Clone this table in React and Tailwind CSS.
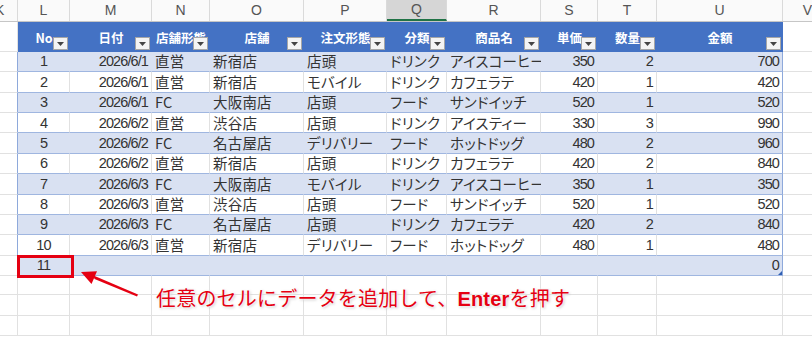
import React from 'react';

const cols = [
  { k: 'K', w: 18 },
  { k: 'L', w: 52, h: 'No', a: 'center', num: true },
  { k: 'M', w: 82, h: '日付', a: 'right', num: true },
  { k: 'N', w: 58, h: '店舗形態', a: 'left' },
  { k: 'O', w: 94, h: '店舗', a: 'left' },
  { k: 'P', w: 83, h: '注文形態', a: 'left' },
  { k: 'Q', w: 60, h: '分類', a: 'left' },
  { k: 'R', w: 94, h: '商品名', a: 'left' },
  { k: 'S', w: 57, h: '単価', a: 'right', num: true },
  { k: 'T', w: 59, h: '数量', a: 'right', num: true },
  { k: 'U', w: 126, h: '金額', a: 'right', num: true },
  { k: 'V', w: 50 },
];

const rows = [
  ['1', '2026/6/1', '直営', '新宿店', '店頭', 'ドリンク', 'アイスコーヒー', '350', '2', '700'],
  ['2', '2026/6/1', '直営', '新宿店', 'モバイル', 'ドリンク', 'カフェラテ', '420', '1', '420'],
  ['3', '2026/6/1', 'FC', '大阪南店', '店頭', 'フード', 'サンドイッチ', '520', '1', '520'],
  ['4', '2026/6/2', '直営', '渋谷店', '店頭', 'ドリンク', 'アイスティー', '330', '3', '990'],
  ['5', '2026/6/2', 'FC', '名古屋店', 'デリバリー', 'フード', 'ホットドッグ', '480', '2', '960'],
  ['6', '2026/6/2', '直営', '新宿店', '店頭', 'ドリンク', 'カフェラテ', '420', '2', '840'],
  ['7', '2026/6/3', 'FC', '大阪南店', 'モバイル', 'ドリンク', 'アイスコーヒー', '350', '1', '350'],
  ['8', '2026/6/3', '直営', '渋谷店', '店頭', 'フード', 'サンドイッチ', '520', '1', '520'],
  ['9', '2026/6/3', 'FC', '名古屋店', '店頭', 'ドリンク', 'カフェラテ', '420', '2', '840'],
  ['10', '2026/6/3', '直営', '新宿店', 'デリバリー', 'フード', 'ホットドッグ', '480', '1', '480'],
  ['11', '', '', '', '', '', '', '', '', '0'],
];

const alignCls = { left: 'justify-start pl-[3px]', right: 'justify-end pr-[3px]', center: 'justify-center' };

// filter dropdown button in the header cells
const FilterBtn = () => (
  <div className="absolute right-[2px] bottom-[2px] w-[15px] h-[13px] bg-[#f4f4f4] border border-[#a6a6a6] flex items-center justify-center">
    <svg width="7" height="4" viewBox="0 0 7 4"><path d="M0 0h7L3.5 4z" fill="#444" /></svg>
  </div>
);

const GridRow = ({ h }) => (
  <div className="flex" style={{ height: h }}>
    {cols.map((c) => (
      <div key={c.k} style={{ width: c.w }} className="shrink-0 border-r border-b border-[#e1e1e1]" />
    ))}
  </div>
);

export default function App() {
  return (
    <div className="relative w-[812px] h-[339px] overflow-hidden bg-white text-[#333] font-['Noto_Sans_CJK_JP',sans-serif]">
      {/* column letters */}
      <div className="flex h-[22px] bg-[#fafafa] border-b border-[#c6c6c6] font-['Liberation_Sans','Noto_Sans_CJK_JP',sans-serif] text-[14px] text-[#555]">
        {cols.map((c) => (
          <div
            key={c.k}
            style={{ width: c.w }}
            className={`shrink-0 flex items-center overflow-hidden border-r border-[#dadada] ${
              c.k === 'K' ? 'justify-start pl-0' : 'justify-center'
            } ${c.k === 'Q' ? 'bg-[#d6d6d6] border-b-2 border-b-[#217346]' : ''}`}
          >
            <span className={c.k === 'K' ? '-ml-[5px]' : ''}>{c.k}</span>
          </div>
        ))}
      </div>

      {/* table header */}
      <div className="flex h-[30px]">
        {cols.map((c, i) => {
          if (i === 0 || i === 11) return <div key={c.k} style={{ width: c.w }} className="shrink-0 border-r border-b border-[#e1e1e1]" />;
          return (
            <div key={c.k} style={{ width: c.w }} className="relative shrink-0 bg-[#4472c4] text-white font-bold text-[12.5px] flex items-center justify-center pt-[2px] whitespace-nowrap">
              {c.h}
              <FilterBtn />
            </div>
          );
        })}
      </div>

      {/* data rows */}
      {rows.map((r, ri) => {
        const band = ri % 2 === 0;
        return (
          <div key={ri} className="flex h-[20.36px] text-[14.5px]">
            {cols.map((c, i) => {
              if (i === 0) return <div key={c.k} style={{ width: c.w }} className="shrink-0 border-r border-b border-r-[#8ea9db] border-b-[#e1e1e1]" />;
              if (i === 11) return <div key={c.k} style={{ width: c.w }} className="shrink-0 border-r border-b border-[#e1e1e1]" />;
              const last = i === 10;
              const v = r[i - 1];
              return (
                <div
                  key={c.k}
                  style={{ width: c.w }}
                  className={`relative shrink-0 flex items-center whitespace-nowrap leading-none border-b border-b-[#9fb6e0] border-r ${
                    last ? 'border-r-[#8ea9db]' : band ? 'border-r-[#d9e1f2]' : 'border-r-[#e1e1e1]'
                  } ${band ? 'bg-[#d9e1f2]' : 'bg-white'} ${alignCls[c.a]} ${
                    c.num
                      ? "font-['Liberation_Sans','Noto_Sans_CJK_JP',sans-serif] text-[14.5px] tracking-[-0.9px]"
                      : '[font-feature-settings:"palt"] tracking-[0.2px]'
                  }`}
                >
                  {v}
                  {last && ri === 10 && (
                    <div className="absolute right-0 bottom-0 w-0 h-0 border-l-[4px] border-l-transparent border-b-[4px] border-b-[#2f5fb3]" />
                  )}
                </div>
              );
            })}
          </div>
        );
      })}

      <GridRow h={19} />
      <GridRow h={21} />
      <GridRow h={20} />

      {/* red highlight box on No 11 */}
      <div className="absolute left-[17px] top-[255px] w-[57px] h-[23px] border-[3px] border-[#e50012]" />

      {/* arrow */}
      <svg className="absolute left-0 top-0 pointer-events-none" width="812" height="339">
        <polygon points="138,294.5 137,296.5 94.5,279 93.5,275.5" fill="#e50012" />
        <polygon points="81,272 97,271.3 91.5,284" fill="#e50012" />
      </svg>

      {/* annotation */}
      <div className="absolute left-[156px] top-[288px] h-[20px] leading-[20px] text-[20px] text-[#e50012] whitespace-nowrap tracking-[0.2px] [text-shadow:0_0_2px_#fff,0_0_3px_#fff,1px_1px_3px_#bbb]">
        任意のセルにデータを追加して、<span className="font-bold font-['Liberation_Sans','Noto_Sans_CJK_JP',sans-serif]">Enter</span>を押す
      </div>
    </div>
  );
}
